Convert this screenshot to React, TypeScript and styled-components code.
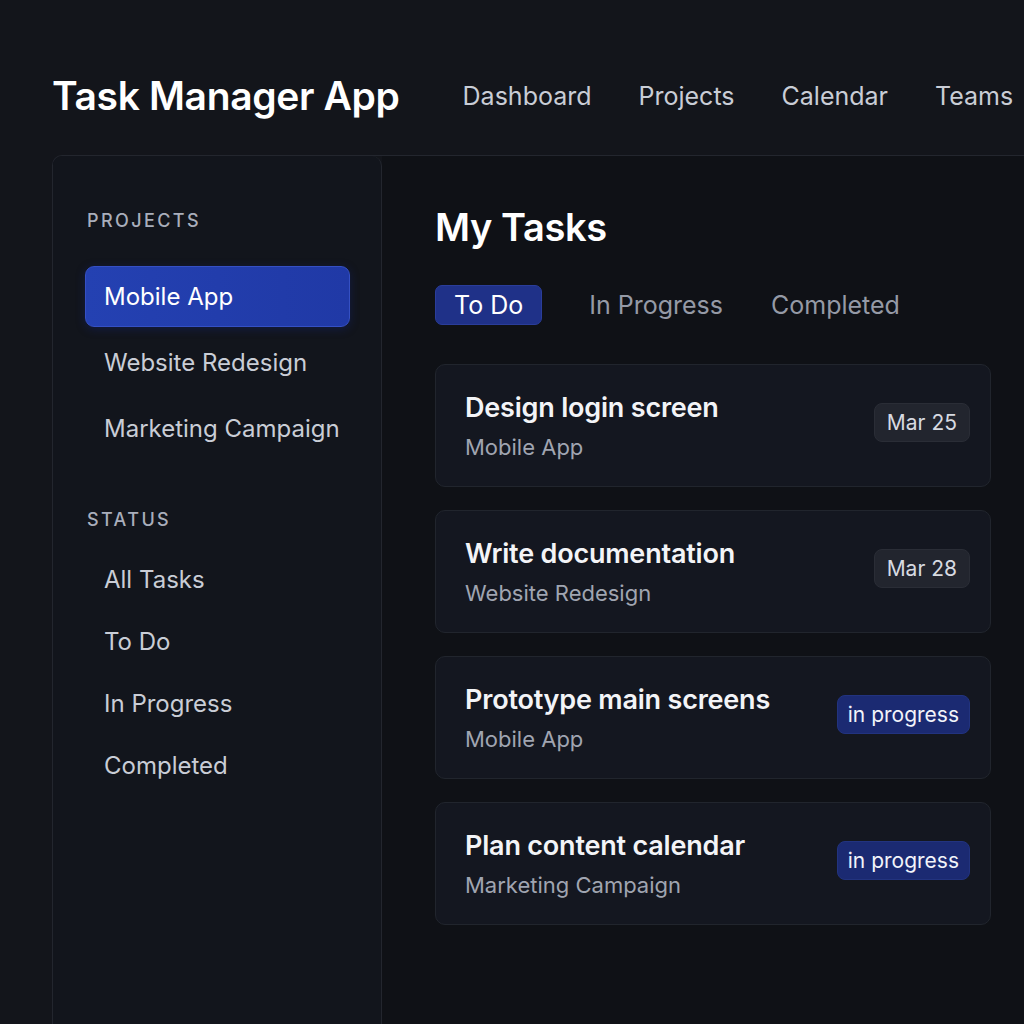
import React from "react";
import styled, { createGlobalStyle } from "styled-components";

const Global = createGlobalStyle`
  html, body { margin: 0; padding: 0; background: #13151b; }
  body { font-family: Inter, "Noto Sans", "Liberation Sans", sans-serif; color: #e8eaef; overflow: hidden; }
  * { box-sizing: border-box; }
`;

const Page = styled.div`
  width: 1024px;
  height: 1024px;
  display: flex;
  flex-direction: column;
  padding-left: 52px;
  background: #13151b;
  overflow: hidden;
`;

const Header = styled.header`
  height: 155px;
  flex-shrink: 0;
  display: flex;
  align-items: center;
  padding-top: 36px;
`;

const Title = styled.h1`
  margin: 0;
  font-size: 39px;
  font-weight: 600;
  color: #ffffff;
  letter-spacing: -0.35px;
  white-space: nowrap;
`;

const Nav = styled.nav`
  display: flex;
  align-items: center;
  margin-left: 63px;
  gap: 47px;
`;

const NavLink = styled.a`
  font-size: 25px;
  color: #c9cdd6;
  white-space: nowrap;
`;

const Body = styled.div`
  flex: 1;
  display: flex;
  border-top: 1px solid #23262e;
  border-left: 1px solid #23262e;
  border-top-left-radius: 10px;
  margin-right: -20px;
  overflow: hidden;
`;

const Sidebar = styled.aside`
  width: 329px;
  flex-shrink: 0;
  background: #12151c;
  border-right: 1px solid #23262e;
  border-top-right-radius: 10px;
  padding: 54px 31px 0 32px;
  display: flex;
  flex-direction: column;
`;

const SectionLabel = styled.div<{ $gap: number }>`
  font-size: 18px;
  font-weight: 500;
  letter-spacing: 2.4px;
  color: #a9aebb;
  line-height: 22px;
  margin-left: 2px;
  margin-bottom: ${(p) => p.$gap}px;
`;

const NavList = styled.div<{ $gap: number; $item: number }>`
  display: flex;
  flex-direction: column;
  gap: ${(p) => p.$gap}px;
  margin-bottom: 50px;
  --item-h: ${(p) => p.$item}px;
`;

const SideItem = styled.div<{ $active?: boolean }>`
  height: var(--item-h);
  display: flex;
  align-items: center;
  padding-left: 18px;
  font-size: 24px;
  border-radius: 9px;
  color: ${(p) => (p.$active ? "#ffffff" : "#c9cdd6")};
  background: ${(p) => (p.$active ? "linear-gradient(90deg, #2441b2, #2039a6)" : "transparent")};
  border: 1px solid ${(p) => (p.$active ? "#3550c4" : "transparent")};
  box-shadow: ${(p) => (p.$active ? "0 2px 10px rgba(20, 40, 140, 0.35)" : "none")};
`;

const Main = styled.main`
  flex: 1;
  background: #0f1116;
  padding: 48px 0 0 53px;
  display: flex;
  flex-direction: column;
`;

const Heading = styled.h2`
  margin: 0;
  font-size: 38px;
  font-weight: 600;
  line-height: 46px;
  color: #ffffff;
  letter-spacing: -0.4px;
`;

const Tabs = styled.div`
  display: flex;
  align-items: center;
  gap: 46px;
  margin-top: 35px;
`;

const Tab = styled.div<{ $active?: boolean }>`
  height: 40px;
  display: flex;
  align-items: center;
  padding: 0 ${(p) => (p.$active ? 18 : 0)}px;
  font-size: 25px;
  border-radius: 7px;
  color: ${(p) => (p.$active ? "#ffffff" : "#959aa6")};
  background: ${(p) => (p.$active ? "#1f3188" : "transparent")};
  border: 1px solid ${(p) => (p.$active ? "#2a3d9a" : "transparent")};
`;

const Cards = styled.div`
  display: flex;
  flex-direction: column;
  gap: 23px;
  margin-top: 39px;
  width: 556px;
`;

const Card = styled.div`
  height: 123px;
  display: flex;
  align-items: center;
  justify-content: space-between;
  padding: 0 20px 0 29px;
  background: #141720;
  border: 1px solid #21252d;
  border-radius: 10px;
`;

const CardText = styled.div`
  display: flex;
  flex-direction: column;
  gap: 10px;
`;

const CardTitle = styled.div`
  font-size: 27px;
  font-weight: 600;
  color: #f3f4f7;
  line-height: 32px;
  letter-spacing: -0.2px;
`;

const CardSub = styled.div`
  font-size: 22px;
  color: #a0a5b1;
  line-height: 26px;
`;

const Badge = styled.div<{ $kind: "date" | "status" }>`
  height: 39px;
  display: flex;
  align-items: center;
  padding: 0 ${(p) => (p.$kind === "date" ? 12 : 10)}px;
  font-size: 21px;
  border-radius: 8px;
  margin-top: -6px;
  color: ${(p) => (p.$kind === "date" ? "#d7dae1" : "#f2f4fa")};
  background: ${(p) => (p.$kind === "date" ? "#22252e" : "#1b2a72")};
  border: 1px solid ${(p) => (p.$kind === "date" ? "#2a2d36" : "#22337f")};
`;

const tasks = [
  { title: "Design login screen", project: "Mobile App", badge: "Mar 25", kind: "date" as const },
  { title: "Write documentation", project: "Website Redesign", badge: "Mar 28", kind: "date" as const },
  { title: "Prototype main screens", project: "Mobile App", badge: "in progress", kind: "status" as const },
  { title: "Plan content calendar", project: "Marketing Campaign", badge: "in progress", kind: "status" as const },
];

export default function App() {
  return (
    <>
      <Global />
      <Page>
        <Header>
          <Title>Task Manager App</Title>
          <Nav>
            <NavLink>Dashboard</NavLink>
            <NavLink>Projects</NavLink>
            <NavLink>Calendar</NavLink>
            <NavLink>Teams</NavLink>
          </Nav>
        </Header>
        <Body>
          <Sidebar>
            <SectionLabel $gap={34}>PROJECTS</SectionLabel>
            <NavList $gap={5} $item={61}>
              <SideItem $active>Mobile App</SideItem>
              <SideItem>Website Redesign</SideItem>
              <SideItem>Marketing Campaign</SideItem>
            </NavList>
            <SectionLabel $gap={20}>STATUS</SectionLabel>
            <NavList $gap={6} $item={56}>
              <SideItem>All Tasks</SideItem>
              <SideItem>To Do</SideItem>
              <SideItem>In Progress</SideItem>
              <SideItem>Completed</SideItem>
            </NavList>
          </Sidebar>
          <Main>
            <Heading>My Tasks</Heading>
            <Tabs>
              <Tab $active>To Do</Tab>
              <Tab>In Progress</Tab>
              <Tab>Completed</Tab>
            </Tabs>
            <Cards>
              {tasks.map((t) => (
                <Card key={t.title}>
                  <CardText>
                    <CardTitle>{t.title}</CardTitle>
                    <CardSub>{t.project}</CardSub>
                  </CardText>
                  <Badge $kind={t.kind}>{t.badge}</Badge>
                </Card>
              ))}
            </Cards>
          </Main>
        </Body>
      </Page>
    </>
  );
}
